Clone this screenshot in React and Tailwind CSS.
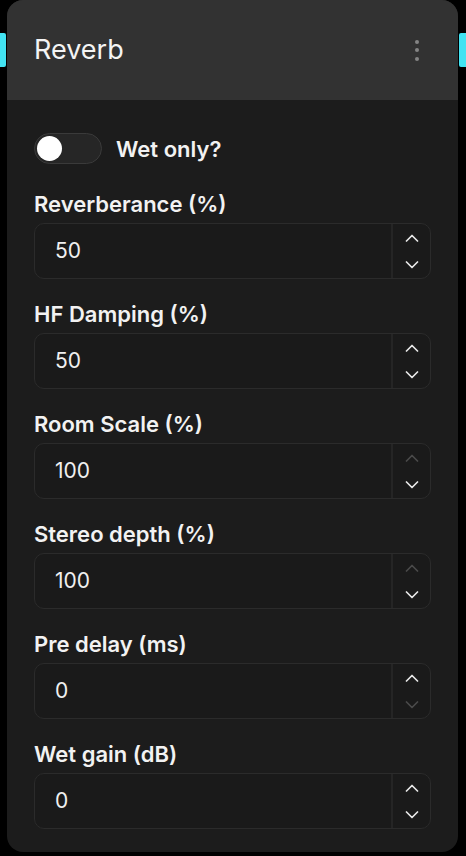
import React, { useState } from "react";

const fields = [
  { label: "Reverberance (%)", value: "50", up: true, down: true },
  { label: "HF Damping (%)", value: "50", up: true, down: true },
  { label: "Room Scale (%)", value: "100", up: false, down: true },
  { label: "Stereo depth (%)", value: "100", up: false, down: true },
  { label: "Pre delay (ms)", value: "0", up: true, down: false },
  { label: "Wet gain (dB)", value: "0", up: true, down: true },
];

const Chevron = ({ dir, enabled }) => (
  <svg
    width="14"
    height="8"
    viewBox="0 0 14 8"
    fill="none"
    stroke={enabled ? "#e8e8e8" : "#4a4a4a"}
    strokeWidth="1.7"
    strokeLinecap="round"
    strokeLinejoin="round"
  >
    {dir === "up" ? (
      <polyline points="1.5,7 7,1.5 12.5,7" />
    ) : (
      <polyline points="1.5,1 7,6.5 12.5,1" />
    )}
  </svg>
);

const NumberField = ({ label, value, up, down }) => (
  <div className="flex flex-col">
    <div className="h-[28px] leading-[28px] text-[22px] font-semibold text-[#f2f2f2]">
      {label}
    </div>
    <div className="mt-[5px] h-[56px] flex rounded-[10px] border border-[#2b2b2b] bg-[#1a1a1a]">
      <div className="flex-1 flex items-center pl-[20px] text-[21px] text-[#f0f0f0]">
        {value}
      </div>
      <div className="w-[39px] flex flex-col border-l-2 border-[#252525]">
        <div className="flex-1 flex items-center justify-center">
          <Chevron dir="up" enabled={up} />
        </div>
        <div className="flex-1 flex items-center justify-center">
          <Chevron dir="down" enabled={down} />
        </div>
      </div>
    </div>
  </div>
);

const App = () => {
  const [wetOnly, setWetOnly] = useState(false);

  return (
    <div
      className="w-[466px] h-[856px] bg-black flex items-start gap-[1px] overflow-hidden"
      style={{ fontFamily: "Inter, 'Noto Sans', sans-serif" }}
    >
      <div className="w-[6px] h-[34px] mt-[33px] rounded-r-[2px] bg-[#42e3f2]" />

      <div className="w-[451px] rounded-[16px] overflow-hidden bg-[#1c1c1c]">
        <div className="h-[100px] bg-[#323232] flex items-center justify-between pl-[27px] pr-[39px]">
          <h1 className="text-[27px] text-[#f4f4f4] font-normal">Reverb</h1>
          <div className="flex flex-col gap-[4.5px]">
            <span className="w-[4px] h-[4px] rounded-full bg-[#858585]" />
            <span className="w-[4px] h-[4px] rounded-full bg-[#858585]" />
            <span className="w-[4px] h-[4px] rounded-full bg-[#858585]" />
          </div>
        </div>

        <div className="px-[27px] pt-[33px] pb-[23px] flex flex-col">
          <div className="h-[31px] flex items-center gap-[14px]">
            <button
              onClick={() => setWetOnly(!wetOnly)}
              className="w-[68px] h-[31px] rounded-full border border-[#3a3a3a] bg-[#262626] flex items-center px-[2px]"
            >
              <span className="w-[25px] h-[25px] rounded-full bg-white" />
            </button>
            <span className="text-[22px] leading-[28px] font-semibold text-[#f2f2f2]">
              Wet only?
            </span>
          </div>

          <div className="mt-[26px] flex flex-col gap-[21px]">
            {fields.map((f) => (
              <NumberField key={f.label} {...f} />
            ))}
          </div>
        </div>
      </div>

      <div className="w-[7px] h-[34px] mt-[33px] rounded-l-[2px] bg-[#42e3f2]" />
    </div>
  );
};

export default App;
